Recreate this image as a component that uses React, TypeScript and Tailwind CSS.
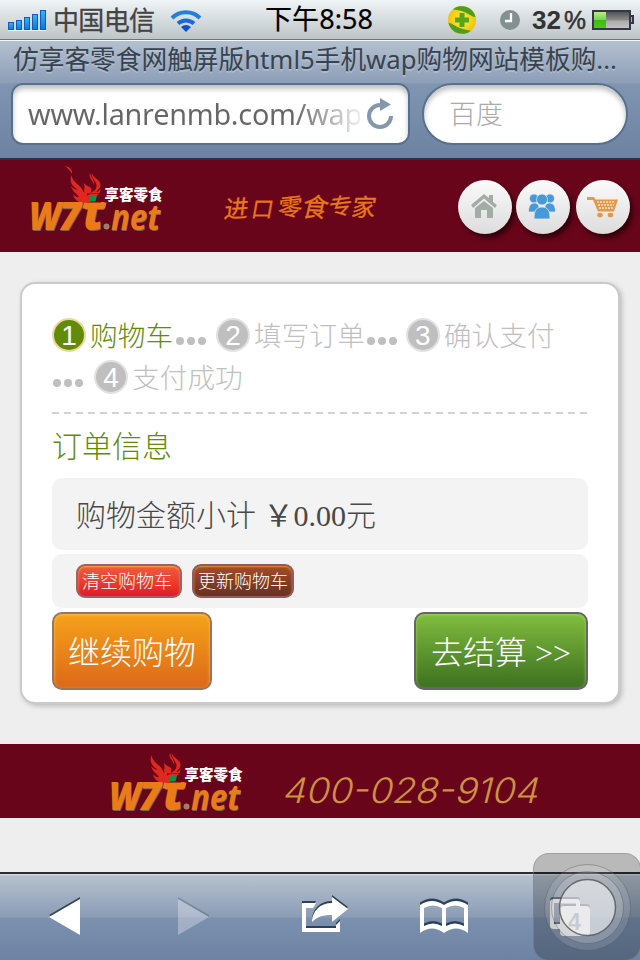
import React from "react";

function Logo({ wisp = true }: { wisp?: boolean }) {
  return (
    <svg width="134" height="68" viewBox="0 0 134 68" className="block shrink-0 overflow-visible">
      <g fill="#df2820">
        {wisp && <path d="M35 0c5 1 8 4 7 8-1-3-4-5-7-8z" />}
        <path d="M41.500 9c1 6 5 8 9 12 2 2 2 4 4 6-1-4 1-6-1-10 5 5 10 3 7 10 4-2 6-4 6-7 0-5-5-7-5-13 3 6 9 7 9 12 0 3-3 5-4 7 2 0 3-2 4-3 0 7-7 5-7 11l-2 3H52c-4-1-8-4-9-8 2 2 4 2 6 2-3-4-7-6-8-11 2 3 4 3 7 4-6-4-9-8-6.500-15z" />
        <path d="M43 27c2 4 4 4 6 8-3-1-5-4-6-8zM60 7c-2 5 3 7 4 12 1-5-3-7-4-12z" />
      </g>
      <g fontFamily="'Open Sans','Noto Sans',sans-serif" fontWeight="700" fontStyle="italic" fill="#ea7b16" className="[text-shadow:1px_1px_0_#75605a]">
        <text x="-1" y="64" fontSize="39" fontWeight="800" textLength="32" lengthAdjust="spacingAndGlyphs">W</text>
        <text x="29" y="64" fontSize="39" fontWeight="800" textLength="22" lengthAdjust="spacingAndGlyphs">7</text>
        <text x="53" y="63.500" fontSize="50" fontWeight="800" textLength="21" lengthAdjust="spacingAndGlyphs">t</text>
        <text x="81" y="64" fontSize="36" textLength="49" lengthAdjust="spacingAndGlyphs">net</text>
      </g>
      <path d="M54 36.500h22.500l-1.500 6H52.500z" fill="#ea7b16" />
      <path d="M57 27.500h14v9H57z" fill="#69051a" />
      <path d="M54 29c3 3 5-2 9-1l6 0-10 8.500h-7z" fill="#df2820" />
      <path d="M60 29.500h7l-1.500 6H58.500z" fill="#0b9444" />
      <circle cx="76.500" cy="60.500" r="3" fill="#a08060" />
      <text x="74.500" y="33.500" fontFamily="'Noto Sans CJK SC',sans-serif" fontWeight="900" fontSize="14.500" fill="#fff" textLength="58">享客零食</text>
    </svg>
  );
}

function StatusBar() {
  return (
    <div className="flex h-10 items-center border-b border-[#6c7578] bg-linear-to-b from-[#eff4f7] to-[#bec5c7]">
      <svg width="640" height="38" viewBox="0 0 640 38" className="block overflow-visible">
        <defs>
          <linearGradient id="sig" x1="0" y1="0" x2="0" y2="1"><stop offset="0" stopColor="#35b4f8" /><stop offset="1" stopColor="#0878e4" /></linearGradient>
          <linearGradient id="bat" x1="0" y1="0" x2="0" y2="1"><stop offset="0" stopColor="#4c4c4e" /><stop offset=".5" stopColor="#8b8b8b" /><stop offset=".55" stopColor="#ababab" /><stop offset="1" stopColor="#c5c5c5" /></linearGradient>
          <linearGradient id="grn" x1="0" y1="0" x2="0" y2="1"><stop offset="0" stopColor="#b8ee87" /><stop offset=".48" stopColor="#78d550" /><stop offset=".52" stopColor="#3eb914" /><stop offset="1" stopColor="#4aca1a" /></linearGradient>
          <radialGradient id="ball"><stop offset="0" stopColor="#fff23a" /><stop offset="1" stopColor="#f2c20c" /></radialGradient>
        </defs>
        <g fill="url(#sig)" stroke="#1359b5" strokeWidth="1">
          <rect x="8.500" y="21.500" width="5" height="7" /><rect x="16.500" y="19.500" width="5" height="9" /><rect x="24.500" y="16.500" width="5" height="12" /><rect x="32.500" y="13.500" width="5" height="15" /><rect x="40.500" y="9.500" width="5" height="19" />
        </g>
        <path d="M8 29.500h38" stroke="#fff" opacity=".7" />
        <text x="53" y="28.500" fontFamily="'Noto Sans CJK SC',sans-serif" fontSize="26" fill="#444" stroke="#444" strokeWidth=".3" textLength="102">中国电信</text>
        <g fill="none" strokeWidth="4">
          <path d="M172 17a20 20 0 0 1 28 0" stroke="#267edc" /><path d="M178 22.500a12 12 0 0 1 16 0" stroke="#146bdf" />
        </g>
        <path d="M181 26q5-4 10 0l-5 5z" fill="#0b4ed0" />
        <text x="265" y="28" fontFamily="'Noto Sans','Noto Sans CJK SC',sans-serif" fontWeight="400" fontSize="27" fill="#000" stroke="#000" strokeWidth=".2" textLength="108">下午8:58</text>
        <circle cx="462" cy="19" r="14" fill="url(#ball)" />
        <path id="leaf" d="M453 8.300a14 14 0 0 1 22.500 7.700c-3 0-5-2-8-3.500-4-2-9-3.500-14.500-4.200z" fill="#4a9e22" />
        <use href="#leaf" transform="rotate(180 462 19)" />
        <path d="M459.500 12h5v4.500h4.500v5h-4.500V26h-5v-4.500H455v-5h4.500z" fill="#55a61c" />
        <circle cx="510" cy="19" r="10" fill="#829090" /><path d="M511 12v8h-6" fill="none" stroke="#fff" strokeWidth="2.300" />
        <text x="532" y="28" fontFamily="'Liberation Sans',sans-serif" fontWeight="700" fontSize="26" fill="#333" textLength="29">32</text>
        <text x="564" y="28" fontFamily="'Liberation Sans',sans-serif" fontWeight="400" fontSize="25" fill="#333" stroke="#333" strokeWidth=".5" textLength="22" lengthAdjust="spacingAndGlyphs">%</text>
        <path d="M630 15h3v7h-3" fill="#aaa" stroke="#34374a" strokeWidth="2" />
        <rect x="593" y="10" width="37" height="18" fill="url(#bat)" stroke="#34374a" strokeWidth="2" /><rect x="594" y="11" width="12" height="16" fill="url(#grn)" />
      </svg>
    </div>
  );
}

function BrowserBar() {
  return (
    <div className="h-[120px] border-t border-b-2 border-t-[#f4f7f8] border-b-[#293343] bg-[linear-gradient(180deg,#b3c0cf_0px,#8d9eb7_42px,#8095b1_43px,#6d82a2_118px)]">
      <div className="flex h-[42px] items-start pl-[13px] font-['Noto_Sans','Noto_Sans_CJK_SC',sans-serif]">
        <svg width="605" height="38" className="block overflow-visible [text-shadow:0_2px_0_#c3cedb80]"><text x="0" y="28" fontSize="26" fill="#38434f" textLength="604" lengthAdjust="spacingAndGlyphs">仿享客零食网触屏版html5手机wap购物网站模板购...</text></svg>
      </div>
      <div className="flex gap-3 pl-[11px]">
        <div className="flex h-[62px] w-[399px] items-center rounded-[12px] border-2 border-[#56708f] bg-white pl-[15px] shadow-[inset_0_4px_5px_#8b8b8b88]">
          <div className="w-[332px] overflow-hidden whitespace-nowrap bg-[linear-gradient(90deg,#666_0,#666_265px,#eee_332px)] bg-clip-text font-['Noto_Sans','Noto_Sans_CJK_SC',sans-serif] text-[28.800px] leading-10 tracking-[-0.25px] text-transparent">www.lanrenmb.com/wap</div>
          <svg width="32" height="36" viewBox="0 0 32 36" className="ml-1"><path d="M27 20a11 11 0 1 1-11-11h1" fill="none" stroke="#8597ad" strokeWidth="4" /><path d="M16 2l11 6.500-11 6.500z" fill="#8597ad" /></svg>
        </div>
        <div className="flex h-[62px] w-[206px] items-center rounded-full border-2 border-[#56708f] bg-white pb-0.5 pl-[25px] shadow-[inset_0_4px_5px_#8b8b8b88]">
          <span className="font-['Noto_Sans_CJK_SC',sans-serif] text-[27px] font-light text-[#aaa]">百度</span>
        </div>
      </div>
    </div>
  );
}

function RoundButton({ children, className = "" }: { children: React.ReactNode; className?: string }) {
  return <div className={"flex size-[54px] items-center justify-center rounded-full bg-linear-to-b from-[#fbfbfb] to-[#dcdcdc] shadow-[3px_4px_5px_#1a0006bb] " + className}>{children}</div>;
}

function Header() {
  return (
    <header className="flex h-[92px] bg-[#69051a]">
      <div className="pt-[6px] pl-[30px]"><Logo /></div>
      <svg width="160" height="50" className="mt-[25px] ml-[58px] shrink-0 overflow-visible" fontFamily="'Noto Sans CJK SC',sans-serif" fontSize="24" fill="#e87817" stroke="#e87817" strokeWidth=".3">
        <g transform="skewX(-10)">
          <text x="7" y="33" fontSize="24" transform="rotate(-3 7 33)">进</text><text x="34" y="32" fontSize="22">口</text><text x="61" y="32" fontSize="24" transform="rotate(-6 60 31)">零</text><text x="84" y="31" fontSize="26" transform="rotate(3 84 31)">食</text><text x="112" y="31" fontSize="23" transform="rotate(-7 112 31)">专</text><text x="134" y="31" fontSize="24">家</text>
        </g>
      </svg>
      <div className="ml-auto flex shrink-0 pt-5 pr-[10px]">
        <RoundButton><svg width="28" height="28" viewBox="0 0 28 28" className="-ml-[2px]" fill="#a4ada5"><path d="M1 12L14 1l5 4V2h4v7l4 3-2 3L14 5.500 3 15z" /><path d="M5 15l9-7 9 7v10h-6v-8h-6v8H5z" /></svg></RoundButton>
        <RoundButton className="ml-1"><svg width="28" height="28" viewBox="0 0 28 28" className="-mt-[3px] -ml-[2px]" fill="#4799d7" stroke="#eee" strokeWidth=".7"><circle cx="6" cy="6.500" r="4.500" /><circle cx="22" cy="6.500" r="4.500" /><path d="M.5 20c0-6 2-9 6-9s5 3 5 9zM16.500 20c0-6 1-9 5-9s6 3 6 9z" /><circle cx="14" cy="7.500" r="5.500" /><path d="M6 27c0-8 2-12 8-12s8 4 8 12z" /></svg></RoundButton>
        <RoundButton className="ml-1.5"><svg width="31" height="28" viewBox="0 0 31 28" className="-ml-[2px]" fill="#e5984a"><path d="M0 4h7l1.500 2.500H31l-4 12H11L6 7H0z" /><path d="M10 9h18M11 12h16M12 15h14" stroke="#f4e3d0" strokeWidth="1.500" strokeDasharray="2 1" /><ellipse cx="13" cy="22" rx="2.800" ry="2.300" /><ellipse cx="23.500" cy="22" rx="2.800" ry="2.300" /></svg></RoundButton>
      </div>
    </header>
  );
}

function Badge({ n, active = false }: { n: string; active?: boolean }) {
  return <span className={"flex size-[34px] shrink-0 items-center justify-center rounded-full border-2 pt-0.5 font-['Liberation_Sans',sans-serif] text-[28px] leading-none text-white " + (active ? "border-[#ecd99a] bg-[#628b0a]" : "border-[#e2e2e2] bg-[#bfbfbf]")}>{n}</span>;
}
function Label({ children }: { children: React.ReactNode }) {
  return <span className="ml-1 block whitespace-nowrap pt-[3px] text-[27.700px] font-light leading-[42px]">{children}</span>;
}
function Dots() {
  return <span className="mt-3 flex shrink-0 gap-[3px]"><i className="size-2 rounded-full bg-[#bfbfbf]" /><i className="size-2 rounded-full bg-[#bfbfbf]" /><i className="size-2 rounded-full bg-[#bfbfbf]" /></span>;
}

function CartCard() {
  return (
    <main className="mx-5 mt-[30px] h-[422px] rounded-[15px] border-2 border-[#cacaca] bg-white px-[30px] pt-[30px] font-['Liberation_Serif','Noto_Sans_CJK_SC',sans-serif] shadow-[2px_2px_5px_#bbb]">
      <div className="flex h-[42px] items-center text-[#bfbfbf]">
        <Badge n="1" active /><span className="text-[#628b0a]"><Label>购物车</Label></span><span className="ml-[3px]"><Dots /></span>
        <span className="ml-2.5"><Badge n="2" /></span><Label>填写订单</Label><span className="ml-0.5"><Dots /></span>
        <span className="ml-[9px]"><Badge n="3" /></span><Label>确认支付</Label>
      </div>
      <div className="flex h-[42px] items-center text-[#bfbfbf]"><span className="ml-px"><Dots /></span><span className="ml-[11px]"><Badge n="4" /></span><Label>支付成功</Label></div>
      <div className="mt-[14px] h-[2px] bg-[repeating-linear-gradient(90deg,#d2d2d2_0_7px,transparent_7px_12px)]" />
      <h2 className="h-16 text-[30px] font-light leading-[65px] text-[#628b0a]">订单信息</h2>
      <div className="h-[72px] whitespace-pre rounded-[10px] bg-[#f3f3f3] pl-6 text-[30px] font-light leading-[70px] text-[#484848]">购物金额小计 <span className="font-['Noto_Sans_CJK_SC',sans-serif] font-normal">￥</span><span>0.00元</span></div>
      <div className="mt-1 flex h-[54px] items-start gap-2.5 rounded-[10px] bg-[#f3f3f3] pt-2.5 pl-6 text-[18px] font-light text-white [text-shadow:0_1px_2px_#333]">
        <button className="flex h-[34px] w-[106px] items-center whitespace-nowrap rounded-[9px] border-2 border-[#a06068] bg-linear-to-b from-[#f15a3f] to-[#df1724] pt-0.5 pl-1 shadow-[inset_0_1px_2px_#fbb229]">清空购物车</button>
        <button className="flex h-[34px] w-[102px] items-center justify-center whitespace-nowrap rounded-[9px] border-2 border-[#925a5e] bg-linear-to-b from-[#a44b2b] to-[#67321d] pt-0.5 shadow-[inset_0_1px_2px_#ed9a20]">更新购物车</button>
      </div>
      <div className="mt-1 flex justify-between text-[32px] font-light text-white [text-shadow:0_1px_2px_#555]">
        <button className="h-[78px] w-[160px] rounded-[10px] border-2 border-[#99765f] bg-linear-to-b from-[#f4a21a] to-[#dc6819] pt-1 shadow-[inset_0_1px_3px_#ffc04f]">继续购物</button>
        <button className="h-[78px] w-[174px] whitespace-nowrap rounded-[10px] border-2 border-[#666] bg-linear-to-b from-[#81bd3f] to-[#3d7120] pt-1 shadow-[inset_0_1px_3px_#98d65c]">去结算 &gt;&gt;</button>
      </div>
    </main>
  );
}

function Toolbar() {
  return (
    <nav className="h-[88px] border-t-2 border-[#2b2e36] bg-[linear-gradient(180deg,#dde3e8_0px,#b5c1cf_2px,#8b9cb5_43px,#7c91b0_44px,#6e83a3_86px)]">
      <svg width="640" height="86" viewBox="0 874 640 86" className="block">
        <defs>
          <path id="back" d="M49 917l31-18v36z" />
          <path id="share" d="M316 903h-14v29h38v-11l-4 4v3h-30v-20h7z" />
          <path id="arrow" d="M332 897v6c-12 0-20 8-20 19 6-6 11-7 20-7v7l16-13z" />
          <path id="book" fillRule="evenodd" d="M420 933V905q12-8 24 0q12-8 24 0v28q-12-9-24 0q-12-9-24 0zM424 908v18q9-5 18 0v-18q-9-5-18 0zM446 908v18q9-5 18 0v-18q-9-5-18 0z" />
          <g id="tabs"><path fillRule="evenodd" d="M554 899h23q3 0 3 3v24q0 3-3 3h-23q-4 0-4-3v-24q0-3 4-3zM554 903v21h22v-21z" /><rect x="560" y="906" width="30" height="30" rx="4" /></g>
        </defs>
        <use href="#back" fill="#33465b" y="-2" /><use href="#back" fill="#fff" />
        <path d="M178 897l31 18v2l-31-18z" fill="#33465b" opacity=".3" /><path d="M178 899l31 18-31 18z" fill="#fff" opacity=".3" />
        <use href="#share" fill="#2d4257" y="-2" /><use href="#share" fill="#fff" />
        <use href="#arrow" fill="#2d4257" y="-2" /><use href="#arrow" fill="#fff" />
        <use href="#book" fill="#2d4257" y="-2.500" /><use href="#book" fill="#fff" />
        <use href="#tabs" fill="#2d4257" y="-2" /><use href="#tabs" fill="#fff" />
        <text x="568" y="930" fontFamily="'Liberation Sans',sans-serif" fontWeight="700" fontSize="23" fill="#7789a3">4</text>
      </svg>
    </nav>
  );
}

export default function App() {
  return (
    <div className="relative h-[960px] w-[640px] overflow-hidden bg-[#eee]">
      <StatusBar /><BrowserBar /><Header /><CartCard />
      <footer className="mt-10 flex h-[74px] bg-[#69051a]">
        <div className="pt-[2px] pl-[110px]"><Logo wisp={false} /></div>
        <svg width="260" height="50" className="mt-[21px] ml-[37px] overflow-visible"><text transform="skewX(-14)" x="10" y="38.500" fontFamily="Inter,sans-serif" fontWeight="300" fontSize="35" fill="#ce9340" textLength="256" lengthAdjust="spacingAndGlyphs">400-028-9104</text></svg>
      </footer>
      <div className="mt-[54px]"><Toolbar /></div>
      <div className="absolute top-[853px] left-[533px] h-[108px] w-[108px] rounded-[16px] border border-[#88888888] bg-[#00000038]">
        <svg width="108" height="108" viewBox="0 0 108 108"><circle cx="53.500" cy="53.500" r="43" fill="#fff" fillOpacity=".12" stroke="#555" strokeOpacity=".4" /><circle cx="53.500" cy="53.500" r="36" fill="#fff" fillOpacity=".18" stroke="#555" strokeOpacity=".4" /><circle cx="53.500" cy="53.500" r="28" fill="#fff" fillOpacity=".52" stroke="#555" strokeOpacity=".8" strokeWidth="1.500" /></svg>
      </div>
    </div>
  );
}
